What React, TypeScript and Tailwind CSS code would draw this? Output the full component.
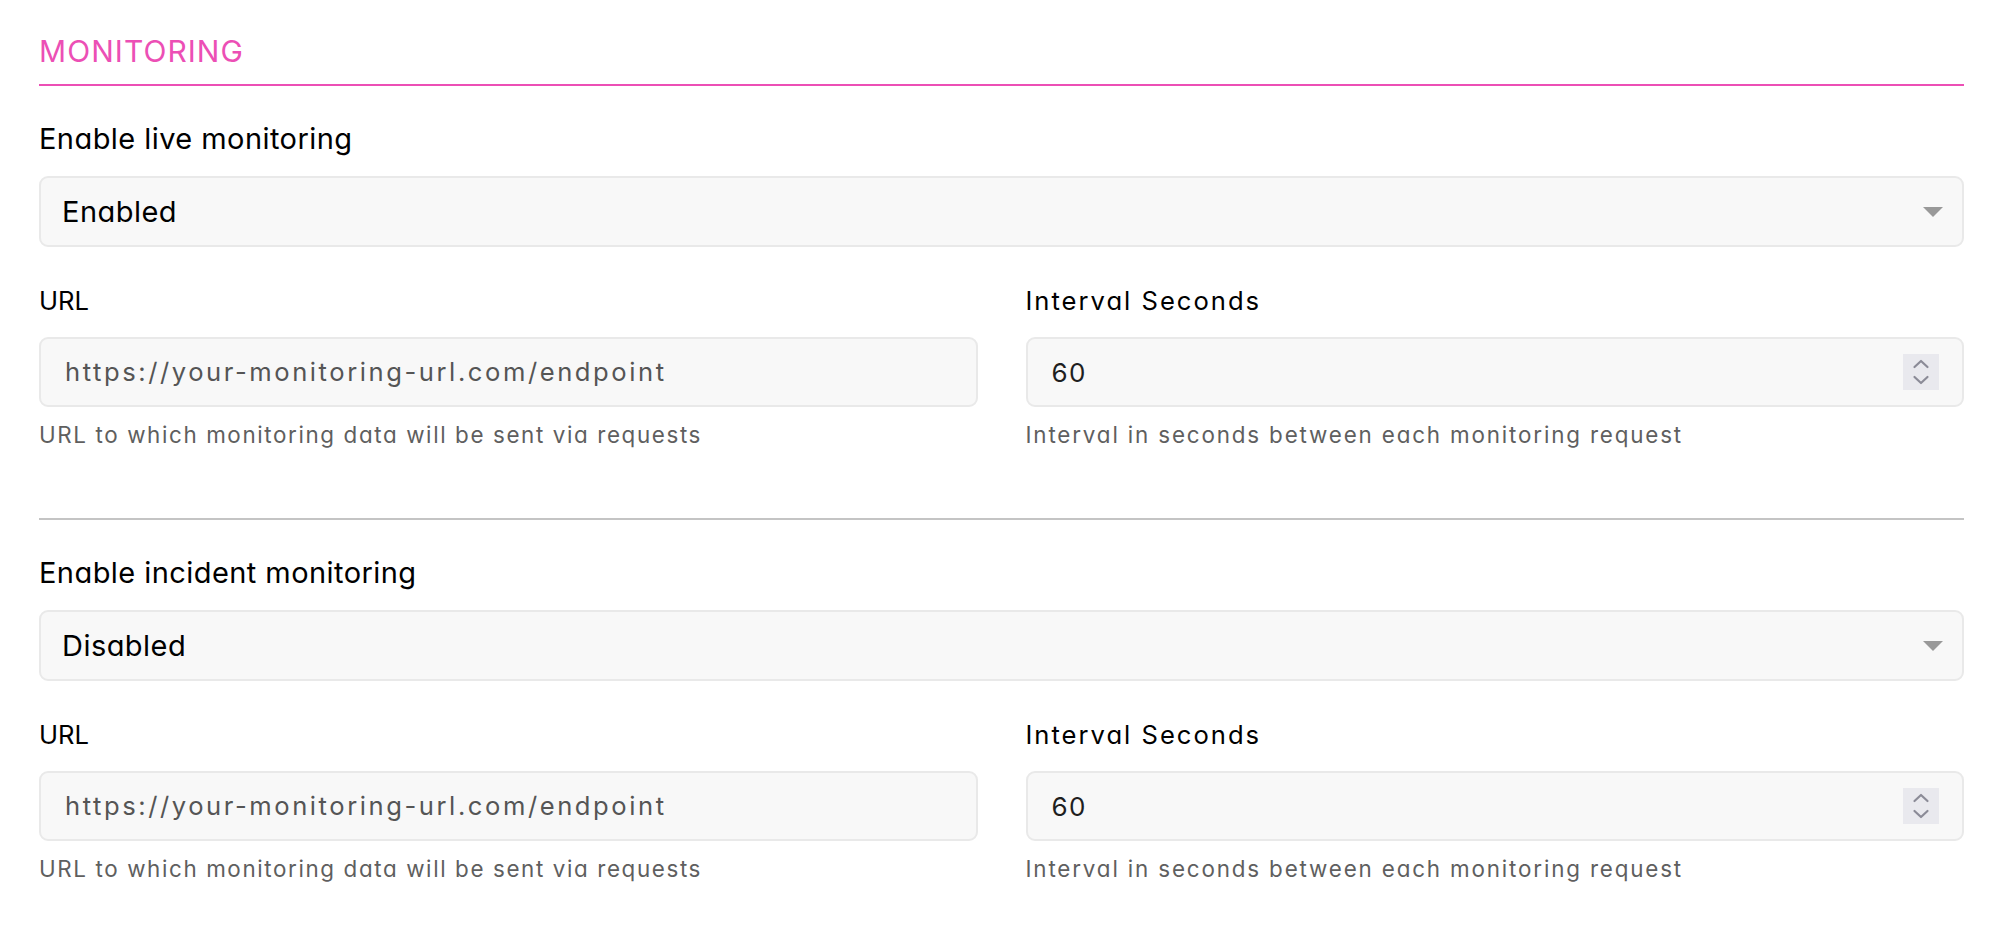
import React from "react";

function Triangle() {
  return (
    <svg width="20" height="10" viewBox="0 0 20 10" className="shrink-0">
      <polygon points="0,0 20,0 10,10" fill="#999999" />
    </svg>
  );
}

function Spinner() {
  return (
    <div className="w-[36px] h-[36px] bg-[#e9e9ee] shrink-0">
      <svg width="36" height="36" viewBox="0 0 36 36">
        <path d="M11.5 13 L18 7 L24.5 13" fill="none" stroke="#8b8b97" strokeWidth="2.2" strokeLinecap="round" strokeLinejoin="round" />
        <path d="M11.5 23 L18 29 L24.5 23" fill="none" stroke="#8b8b97" strokeWidth="2.2" strokeLinecap="round" strokeLinejoin="round" />
      </svg>
    </div>
  );
}

function UrlField() {
  return (
    <div className="flex flex-col">
      <div className="text-[25.6px] leading-[32px] text-black">URL</div>
      <div className="mt-[20px] h-[70px] rounded-[9px] border-2 border-[#e9e9e9] bg-[#f8f8f8] flex items-center pl-[24px] pr-[23px]">
        <span className="text-[25.6px] tracking-[0.1em] text-[#555555] whitespace-nowrap">
          https://your-monitoring-url.com/endpoint
        </span>
      </div>
      <div className="mt-[14px] text-[22.4px] leading-[28px] tracking-[0.072em] text-[#5f5f5f] whitespace-nowrap">
        URL to which monitoring data will be sent via requests
      </div>
    </div>
  );
}

function IntervalField() {
  return (
    <div className="flex flex-col">
      <div className="text-[25.6px] leading-[32px] tracking-[0.078em] text-black">Interval Seconds</div>
      <div className="mt-[20px] h-[70px] rounded-[9px] border-2 border-[#e9e9e9] bg-[#f8f8f8] flex items-center justify-between pl-[24px] pr-[23px]">
        <span className="text-[26px] tracking-[0.05em] text-[#1f1f1f]">60</span>
        <Spinner />
      </div>
      <div className="mt-[14px] text-[22.4px] leading-[28px] tracking-[0.082em] text-[#5f5f5f] whitespace-nowrap">
        Interval in seconds between each monitoring request
      </div>
    </div>
  );
}

function Section({ title, value }: { title: string; value: string }) {
  return (
    <div className="pt-[35px]">
      <div className="text-[29px] leading-[36px] tracking-[0.015em] text-black">{title}</div>
      <div className="mt-[19px] h-[71px] rounded-[9px] border-2 border-[#e9e9e9] bg-[#f8f8f8] flex items-center justify-between pl-[21px] pr-[19px]">
        <span className="text-[29px] tracking-[0.016em] text-black">{value}</span>
        <Triangle />
      </div>
      <div className="mt-[38px] grid grid-cols-2 gap-x-[48px]">
        <UrlField />
        <IntervalField />
      </div>
    </div>
  );
}

export default function App() {
  return (
    <div className="w-[2014px] min-h-[946px] bg-white pl-[39px] pr-[50px] pt-[33px] font-['Inter',sans-serif] [font-feature-settings:'cv11']">
      <div className="text-[30px] leading-[36px] tracking-[0.035em] text-[#ec4fb5] pb-[15px] border-b-2 border-[#ec4fb5]">
        MONITORING
      </div>
      <Section title="Enable live monitoring" value="Enabled" />
      <div className="mt-[69px] border-t-2 border-[#c4c4c4]" />
      <Section title="Enable incident monitoring" value="Disabled" />
    </div>
  );
}
